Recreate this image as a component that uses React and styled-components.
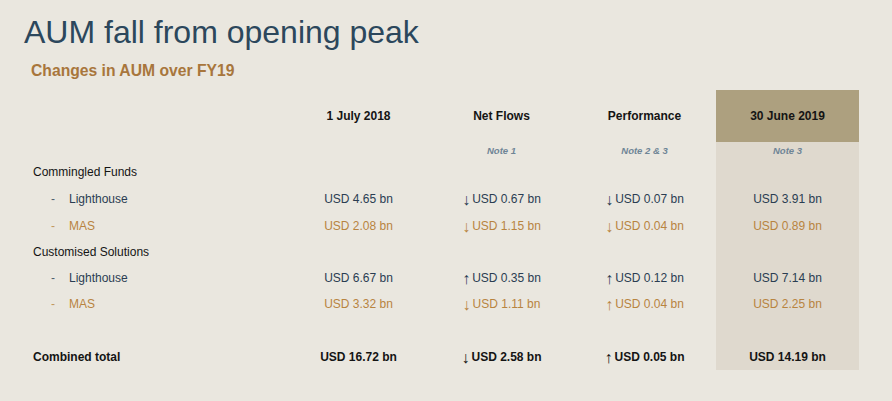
import React from "react";
import styled, { createGlobalStyle } from "styled-components";

const GlobalStyle = createGlobalStyle`
  html, body {
    margin: 0;
    padding: 0;
    background: #eae7df;
  }
  body {
    font-family: "Liberation Sans", Arial, sans-serif;
  }
`;

const Page = styled.div`
  width: 892px;
  height: 401px;
  background: #eae7df;
  overflow: hidden;
  box-sizing: border-box;
  padding: 12px 0 0 0;
`;

const Title = styled.h1`
  margin: 0 0 0 24px;
  font-weight: normal;
  font-size: 32px;
  line-height: 40px;
  color: #2c475c;
`;

const Subtitle = styled.h2`
  margin: 9px 0 0 31px;
  font-size: 15.7px;
  line-height: 20px;
  font-weight: bold;
  color: #a8763c;
`;

const Table = styled.div`
  display: grid;
  grid-template-columns: 254px repeat(4, 143px);
  margin: 9px 0 0 33px;
  font-size: 12px;
`;

const Cell = styled.div`
  display: flex;
  align-items: center;
  justify-content: ${(p) => (p.$label ? "flex-start" : "center")};
  height: ${(p) => p.$h}px;
  white-space: nowrap;
  background: ${(p) =>
    p.$head && p.$hl ? "#ada07f" : p.$hl ? "#dfd9ce" : "transparent"};
  color: ${(p) => p.$color};
  font-weight: ${(p) => (p.$bold ? "bold" : "normal")};
`;

const Note = styled.span`
  font-size: 9.5px;
  font-style: italic;
  font-weight: bold;
  color: #6f8596;
`;

const Dash = styled.span`
  display: inline-block;
  width: 18px;
  padding-left: 18px;
  color: ${(p) => p.$color};
  opacity: 0.8;
`;

const Arrow = styled.span`
  font-family: "Liberation Sans", sans-serif;
  font-size: 16px;
  line-height: 12px;
  margin-right: 2px;
  position: relative;
  top: 1px;
  font-weight: normal;
`;

const NAVY = "#2a3d52";
const GOLD = "#b8843f";
const BLACK = "#141414";

const rows = [
  { type: "group", label: "Commingled Funds", h: 26 },
  { type: "item", label: "Lighthouse", color: NAVY, h: 27, vals: ["USD 4.65 bn", ["↓", "USD 0.67 bn"], ["↓", "USD 0.07 bn"], "USD 3.91 bn"] },
  { type: "item", label: "MAS", color: GOLD, h: 27, vals: ["USD 2.08 bn", ["↓", "USD 1.15 bn"], ["↓", "USD 0.04 bn"], "USD 0.89 bn"] },
  { type: "group", label: "Customised Solutions", h: 26 },
  { type: "item", label: "Lighthouse", color: NAVY, h: 26, vals: ["USD 6.67 bn", ["↑", "USD 0.35 bn"], ["↑", "USD 0.12 bn"], "USD 7.14 bn"] },
  { type: "item", label: "MAS", color: GOLD, h: 26, vals: ["USD 3.32 bn", ["↓", "USD 1.11 bn"], ["↑", "USD 0.04 bn"], "USD 2.25 bn"] },
  { type: "spacer", h: 26 },
  { type: "total", label: "Combined total", color: BLACK, h: 27, vals: ["USD 16.72 bn", ["↓", "USD 2.58 bn"], ["↑", "USD 0.05 bn"], "USD 14.19 bn"] },
];

const heads = ["1 July 2018", "Net Flows", "Performance", "30 June 2019"];
const notes = ["", "Note 1", "Note 2 & 3", "Note 3"];

function Value({ v }) {
  if (Array.isArray(v)) {
    return (
      <>
        <Arrow>{v[0]}</Arrow>
        {v[1]}
      </>
    );
  }
  return v;
}

export default function App() {
  return (
    <Page>
      <GlobalStyle />
      <Title>AUM fall from opening peak</Title>
      <Subtitle>Changes in AUM over FY19</Subtitle>
      <Table>
        <Cell $label $h={52} />
        {heads.map((h, i) => (
          <Cell key={h} $h={52} $head $hl={i === 3} $bold $color={BLACK}>
            {h}
          </Cell>
        ))}
        <Cell $label $h={17} />
        {notes.map((n, i) => (
          <Cell key={i} $h={17} $hl={i === 3}>
            <Note>{n}</Note>
          </Cell>
        ))}
        {rows.map((r, ri) => (
          <React.Fragment key={ri}>
            <Cell
              $label
              $h={r.h}
              $bold={r.type === "total"}
              $color={r.type === "item" ? r.color : BLACK}
            >
              {r.type === "item" && <Dash $color={r.color}>-</Dash>}
              {r.label}
            </Cell>
            {[0, 1, 2, 3].map((c) => (
              <Cell
                key={c}
                $h={r.h}
                $hl={c === 3}
                $bold={r.type === "total"}
                $color={r.color}
              >
                {r.vals && <Value v={r.vals[c]} />}
              </Cell>
            ))}
          </React.Fragment>
        ))}
      </Table>
    </Page>
  );
}
